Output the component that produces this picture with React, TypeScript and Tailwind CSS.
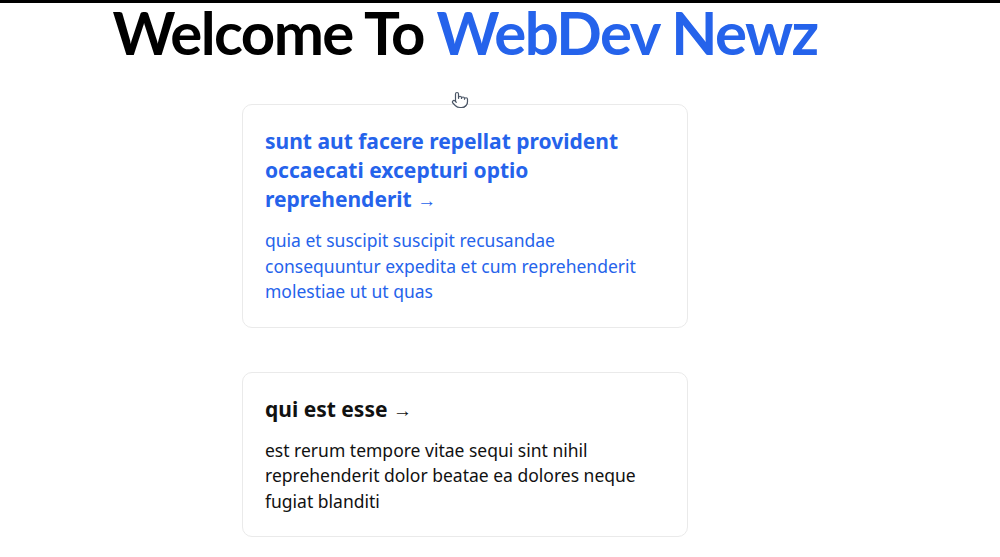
import React from 'react';
import { Pointer } from 'lucide-react';

const posts = [
    {
        title: 'sunt aut facere repellat provident occaecati excepturi optio reprehenderit',
        body: 'quia et suscipit suscipit recusandae consequuntur expedita et cum reprehenderit molestiae ut ut quas',
        active: true,
    },
    {
        title: 'qui est esse',
        body: 'est rerum tempore vitae sequi sint nihil reprehenderit dolor beatae ea dolores neque fugiat blanditi',
        active: false,
    },
];

function PostCard({ title, body, active }: { title: string; body: string; active: boolean }) {
    return (
        <a
            href="#"
            className={`block w-[446px] rounded-[10px] border border-[#eaeaea] p-[22px] ${active ? 'text-[#2563eb]' : 'text-[#111]'}`}
        >
            <h2 className="text-[21px] leading-[29px] font-bold mb-[13px]">
                {title} <span className="font-normal text-[19px]">&rarr;</span>
            </h2>
            <p className="text-[17.5px] leading-[25.5px]">{body}</p>
        </a>
    );
}

export default function App() {
    return (
        <div className="min-h-[557px] bg-white border-t-[3px] border-black relative" style={{ fontFamily: '"Noto Sans", sans-serif' }}>
            <main className="w-[930px] flex flex-col items-center">
                <h1 className="text-[60px] leading-[58px] font-bold tracking-[-1.6px] text-black" style={{ fontFamily: 'Lato, sans-serif' }}>
                    Welcome To <span className="text-[#2563eb]">WebDev Newz</span>
                </h1>
                <div className="flex flex-col gap-[44px] mt-[43px]">
                    {posts.map(p => (
                        <PostCard key={p.title} {...p} />
                    ))}
                </div>
            </main>
            <Pointer size={18} strokeWidth={1.6} className="absolute left-[451px] top-[88px] text-gray-600 fill-white" />
        </div>
    );
}
